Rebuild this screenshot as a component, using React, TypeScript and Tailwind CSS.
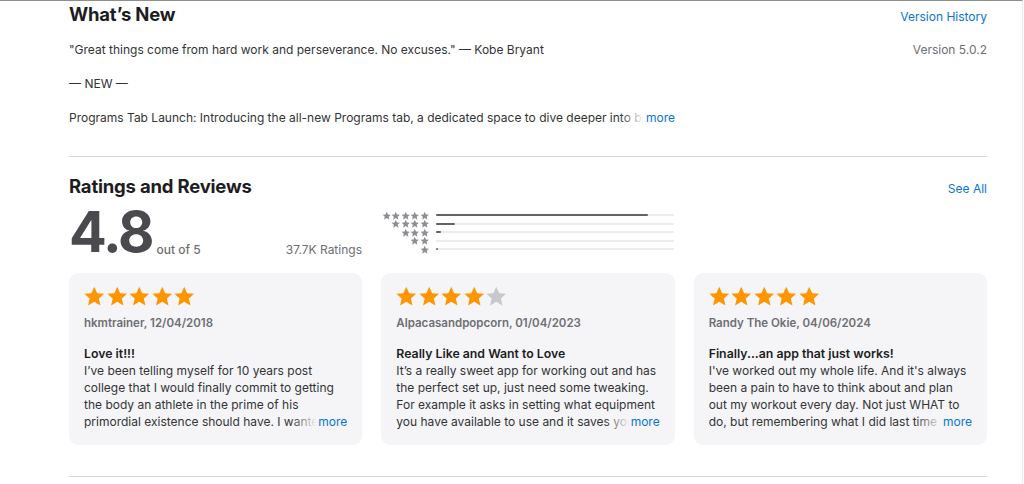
import React from "react";

const Star = ({ color, size }: { color: string; size: number }) => (
  <svg width={size} height={size} viewBox="0 0 24 24">
    <path
      d="M12 1.8l3.1 6.9 7.4.7-5.6 5 1.7 7.4L12 17.9l-6.6 3.9 1.7-7.4-5.6-5 7.4-.7z"
      fill={color}
    />
  </svg>
);

const reviews = [
  {
    stars: 5,
    author: "hkmtrainer, 12/04/2018",
    title: "Love it!!!",
    body: "I’ve been telling myself for 10 years post college that I would finally commit to getting the body an athlete in the prime of his primordial existence should have. I wanted something that would actually keep me on track.",
  },
  {
    stars: 4,
    author: "Alpacasandpopcorn, 01/04/2023",
    title: "Really Like and Want to Love",
    body: "It’s a really sweet app for working out and has the perfect set up, just need some tweaking. For example it asks in setting what equipment you have available to use and it saves your preferences for later.",
  },
  {
    stars: 5,
    author: "Randy The Okie, 04/06/2024",
    title: "Finally...an app that just works!",
    body: "I've worked out my whole life. And it's always been a pain to have to think about and plan out my workout every day. Not just WHAT to do, but remembering what I did last time and how much weight.",
  },
];

const hist = [89, 8, 2, 0, 1];

export default function App() {
  return (
    <div
      className="w-[1023px] h-[484px] overflow-hidden bg-white border-t border-[#8e8e8e] border-r border-r-[#ececec] text-[#1d1d1f]"
      style={{ fontFamily: "Inter, 'Noto Sans', sans-serif" }}
    >
      <div className="ml-[69px] w-[918px]">
        {/* What's New */}
        <div className="flex justify-between items-baseline">
          <h2 className="text-[18.5px] font-bold leading-[26px] tracking-[-0.2px]">What’s New</h2>
          <a className="text-[12px] text-[#0a74d6]">Version History</a>
        </div>
        <div className="flex justify-between mt-[14px] text-[12px] leading-[17px] text-[#333336]">
          <div className="w-[620px]">
            <p>"Great things come from hard work and perseverance. No excuses." — Kobe Bryant</p>
            <p className="mt-[17px]">— NEW —</p>
            <div className="relative mt-[17px] w-[606px] whitespace-nowrap overflow-hidden">
              Programs Tab Launch: Introducing the all-new Programs tab, a dedicated space to dive deeper into building strength
              <span className="absolute right-0 top-0 flex">
                <span className="w-[24px] bg-gradient-to-r from-white/0 to-white"></span>
                <span className="bg-white pl-[2px] text-[#0a74d6]">more</span>
              </span>
            </div>
          </div>
          <p className="text-[#6e6e73]">Version 5.0.2</p>
        </div>

        <div className="mt-[30px] h-px bg-[#d9d9dc]"></div>

        {/* Ratings */}
        <div className="flex justify-between items-baseline mt-[16px]">
          <h2 className="text-[18.5px] font-bold leading-[26px] tracking-[-0.2px]">Ratings and Reviews</h2>
          <a className="text-[12px] text-[#0a74d6]">See All</a>
        </div>

        <div className="flex items-start mt-[6px]">
          <div className="w-[293px] flex items-end justify-between">
            <div className="flex items-end">
              <span className="text-[56px] font-bold leading-[54px] tracking-[-2px] text-[#4a4a4e]">4.8</span>
              <span className="text-[12px] leading-[17px] font-medium text-[#6e6e73] ml-[4px] mb-[1px]">out of 5</span>
            </div>
            <span className="text-[12px] leading-[17px] text-[#6e6e73] mb-[1px]">37.7K Ratings</span>
          </div>
          <div className="ml-[19px] mt-[6px] flex flex-col">
            {hist.map((v, i) => (
              <div key={i} className="flex items-center h-[8.5px]">
                <div className="w-[48px] flex justify-end gap-0">
                  {Array.from({ length: 5 - i }).map((_, k) => (
                    <Star key={k} color="#8e8e93" size={9.5} />
                  ))}
                </div>
                <div className="ml-[7px] w-[238px] h-[2px] bg-[#ececef] rounded-full">
                  <div className="h-[2px] bg-[#636366] rounded-full" style={{ width: `${v}%` }}></div>
                </div>
              </div>
            ))}
          </div>
        </div>

        <div className="grid grid-cols-3 gap-[19px] mt-[14px]">
          {reviews.map((r, i) => (
            <div key={i} className="bg-[#f5f5f7] rounded-[9px] h-[172px] px-[15px] pt-[12px]">
              <div className="flex gap-[0px] -ml-[1px]">
                {Array.from({ length: 5 }).map((_, k) => (
                  <Star key={k} color={k < r.stars ? "#ff9500" : "#c7c7cc"} size={22.5} />
                ))}
              </div>
              <p className="mt-[7px] text-[11.5px] leading-[16px] font-semibold text-[#6e6e73]">{r.author}</p>
              <p className="mt-[14px] text-[12.3px] leading-[17px] font-semibold text-[#1d1d1f]">{r.title}</p>
              <div className="relative h-[68px] overflow-hidden text-[12px] leading-[17px] text-[#333336]">
                {r.body}
                <span className="absolute right-0 bottom-0 flex h-[17px]">
                  <span className="w-[26px] bg-gradient-to-r from-[#f5f5f7]/0 to-[#f5f5f7]"></span>
                  <span className="bg-[#f5f5f7] pl-[1px] text-[#0a74d6]">more</span>
                </span>
              </div>
            </div>
          ))}
        </div>

        <div className="mt-[31px] h-px bg-[#d9d9dc]"></div>
      </div>
    </div>
  );
}
